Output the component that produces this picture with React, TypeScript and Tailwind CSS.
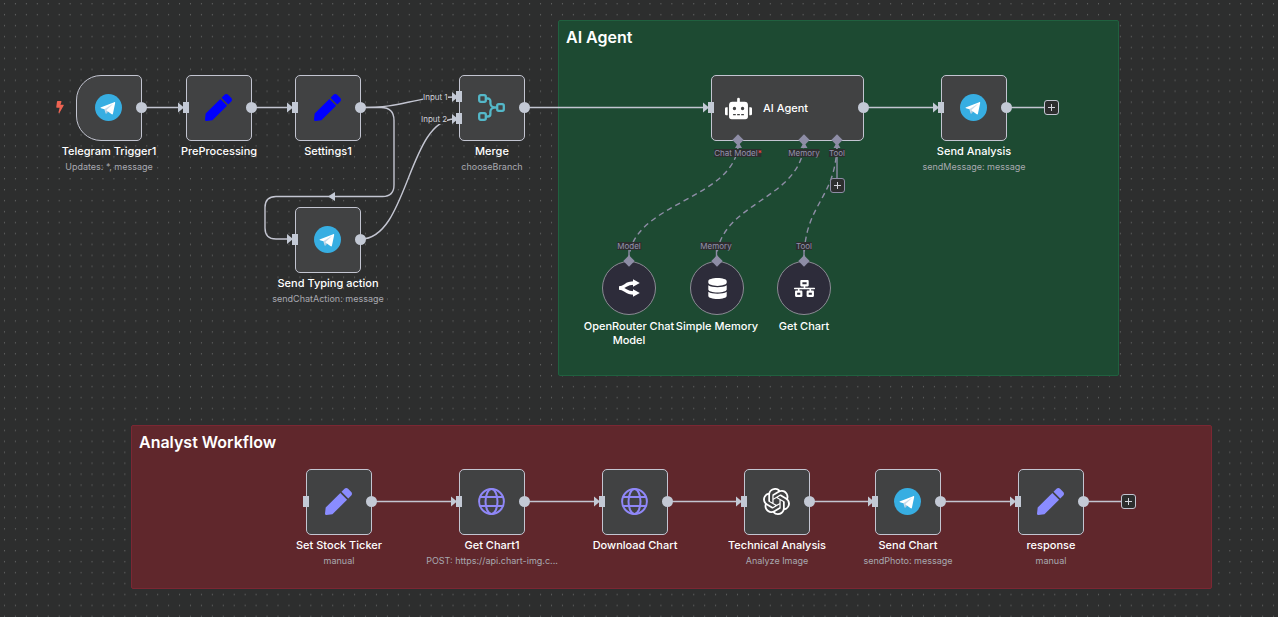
import type { ReactNode } from "react";
import { FaBolt, FaDatabase, FaNetworkWired, FaPen, FaRobot } from "react-icons/fa";
import { SiOpenai } from "react-icons/si";

function TelegramIcon() {
  return (
    <svg viewBox="0 0 240 240" className="size-[27px]" aria-hidden="true">
      <circle cx="120" cy="120" r="120" fill="#37aee2" />
      <path fill="#c8daea" d="M98 175c-3.888 0-3.227-1.468-4.568-5.17L82 132.207 170 80" />
      <path fill="#a9c9dd" d="M98 175c3 0 4.325-1.372 6-3l16-15.558-19.958-12.035" />
      <path
        fill="#fff"
        d="M100.04 144.41l48.36 35.729c5.519 3.045 9.501 1.468 10.876-5.123l19.685-92.763c2.015-8.08-3.08-11.746-8.36-9.349l-115.59 44.571c-7.89 3.165-7.843 7.567-1.438 9.528l29.663 9.259 68.673-43.325c3.242-1.966 6.218-.91 3.776 1.258"
      />
    </svg>
  );
}

function MergeIcon() {
  return (
    <svg viewBox="0 0 27 27" className="size-[27px]" fill="none" stroke="#54b8c9" strokeWidth="2.3" aria-hidden="true">
      <rect x="1.2" y="1.2" width="6.6" height="6.6" rx="1.5" />
      <rect x="1.2" y="19.2" width="6.6" height="6.6" rx="1.5" />
      <rect x="19.2" y="10.2" width="6.6" height="6.6" rx="1.5" />
      <path d="M7.8 4.5h2a2.6 2.6 0 0 1 2.6 2.6v2.2a4.2 4.2 0 0 0 4.2 4.2h2.6M7.8 22.500h2a2.6 2.6 0 0 0 2.6-2.6v-2.2a4.2 4.2 0 0 1 4.2-4.2" />
    </svg>
  );
}

function GlobeIcon() {
  return (
    <svg viewBox="0 0 27 27" className="size-[27px]" fill="none" stroke="#8f87f7" strokeWidth="2" aria-hidden="true">
      <circle cx="13.5" cy="13.5" r="12.4" />
      <ellipse cx="13.5" cy="13.5" rx="6" ry="12.4" />
      <path d="M1.8 9h23.4M1.8 18h23.4" />
    </svg>
  );
}

function RouterIcon() {
  return (
    <svg viewBox="0 0 21 18" className="h-[18px] w-[21px]" fill="#fff" aria-hidden="true">
      <path
        fill="none"
        stroke="#fff"
        strokeWidth="3.4"
        d="M0 9c3 0 4.5-1 6.5-2.5S10.5 4 15 4M0 9c3 0 4.5 1 6.5 2.5S10.500 14 15 14"
      />
      <path d="M14 .3 20.8 4 14 7.700zM14 10.300 20.800 14 14 17.700z" />
    </svg>
  );
}

function PlusButton({ place, label }: { place: string; label: string }) {
  return (
    <button
      type="button"
      aria-label={label}
      className={`absolute flex size-[15px] items-center justify-center rounded-[3px] border bg-[#2d2e2e] ${place}`}
    >
      <svg viewBox="0 0 7 7" className="size-[7px]" stroke="#d3d4dc" strokeWidth="1" aria-hidden="true">
        <path d="M3.5 0v7M0 3.5h7" />
      </svg>
    </button>
  );
}

function Title({ children }: { children: ReactNode }) {
  return <p className="text-[11px] leading-[14px] font-medium whitespace-nowrap text-white">{children}</p>;
}

type NodeProps = {
  place: string;
  title: string;
  subtitle?: string;
  icon: ReactNode;
  inputs?: string[];
  shape?: string;
};

function FlowNode({ place, title, subtitle, icon, inputs = ["top-[27px]"], shape = "rounded-[5px]" }: NodeProps) {
  return (
    <article className={`absolute flex w-[66px] flex-col items-center ${place}`}>
      <div
        className={`flex h-[66px] w-full items-center justify-center border border-[#c3c5d1] bg-[#414243] pr-px pb-px ${shape}`}
      >
        {icon}
      </div>
      {inputs.map((input) => (
        <span key={input} className={`absolute -left-[3px] h-[11px] w-[6px] bg-[#c3c9d5] ${input}`} />
      ))}
      <span className="absolute top-[27px] left-[60px] size-[11px] rounded-full bg-[#c3c9d5]" />
      <div className="mt-[3px] flex flex-col items-center gap-[2px]">
        <Title>{title}</Title>
        {subtitle && <p className="text-[9px] leading-[14px] whitespace-nowrap text-[#a8a9b0]">{subtitle}</p>}
      </div>
    </article>
  );
}

function PortLabel({ place, children }: { place: string; children: ReactNode }) {
  return (
    <span
      className={`absolute -translate-x-1/2 bg-[#2d2e2e] text-[8px] leading-[8px] whitespace-nowrap text-[#9392ae] ${place}`}
    >
      {children}
    </span>
  );
}

function Diamond({ place }: { place: string }) {
  return <span className={`absolute size-2 rotate-45 bg-[#8e8da6] ${place}`} />;
}

function SubNode({ place, title, icon }: { place: string; title: string; icon: ReactNode }) {
  return (
    <article className={`absolute flex w-[54px] flex-col items-center ${place}`}>
      <div className="flex h-[54px] w-full items-center justify-center rounded-full border border-[#8b8b94] bg-[#2d2c3a] text-white">
        {icon}
      </div>
      <Diamond place="-top-[4px] left-[23px]" />
      <p className="mt-1 w-[92px] text-center text-[11px] leading-[14px] font-medium text-white">{title}</p>
    </article>
  );
}

function Sticky({ place, title }: { place: string; title: string }) {
  return (
    <section className={`absolute rounded-[2px] border px-[7px] py-[6px] ${place}`}>
      <h2 className="text-[16px] leading-[20px] font-semibold text-white">{title}</h2>
    </section>
  );
}

function Backdrop() {
  return (
    <svg className="absolute inset-0 size-full" aria-hidden="true">
      <defs>
        <pattern id="dots" x="4" y="3" width="10.94" height="10.94" patternUnits="userSpaceOnUse">
          <rect width="1" height="1.4" fill="#5f6060" />
        </pattern>
      </defs>
      <rect width="100%" height="100%" fill="url(#dots)" />
    </svg>
  );
}

const wires = [
  "M142 107.5H180",
  "M252 107.5H290",
  "M361 107.5C408 107.5 408 97 455 97",
  "M361 107.5H381Q394 107.5 394 120.5V185Q394 196.5 382.5 196.5H276Q265 196.5 265 207.5V228Q265 239 276 239H290",
  "M361 239C408 239 408 119 455 119",
  "M525 107.5H706",
  "M864 107.5H936",
  "M1006 107.5H1045",
  "M372 501.5H454",
  "M525 501.5H597",
  "M667 501.5H739",
  "M810 501.5H871",
  "M941 501.5H1013",
  "M1083 501.5H1121",
];

const arrows = [
  [183, 107.5],
  [292, 107.5],
  [457, 97],
  [457, 119],
  [292, 239],
  [708, 107.5],
  [938, 107.5],
  [456, 501.5],
  [599, 501.5],
  [741, 501.5],
  [873, 501.5],
  [1015, 501.5],
];

function Wires() {
  return (
    <svg className="absolute inset-0 size-full" fill="none" aria-hidden="true">
      <g stroke="#c3c5d1" strokeWidth="1.4">
        {wires.map((d) => (
          <path key={d} d={d} />
        ))}
      </g>
      <g fill="#c3c9d5">
        {arrows.map(([x, y]) => (
          <path key={`${x}-${y}`} d={`M${x + 1} ${y}l-6 -5v10z`} />
        ))}
        <path d="M328 196.5l7 -4.5v9z" />
      </g>
      <g stroke="#8e8da6" strokeWidth="1.4">
        <g strokeDasharray="5.5 4">
          <path d="M629 261C629 201 738.5 201 738.5 141" />
          <path d="M716.5 261C716.5 201 804 201 804 141" />
          <path d="M804 261C804 201 837 201 837 141" />
        </g>
        <path d="M837 141V179M629 250V258M716.5 250V258M804 250V258" />
      </g>
      <path fill="#8e8da6" d="M738.5 142l3.5 6h-7zM804 142l3.5 6h-7zM837 142l3.5 6h-7z" />
    </svg>
  );
}

const bluePen = <FaPen className="size-[27px] text-[#0000ff]" />;
const violetPen = <FaPen className="size-[27px] text-[#8a8cff]" />;

export default function App() {
  return (
    <main className="relative min-h-screen overflow-hidden bg-[#2d2e2e] font-['Inter',sans-serif]">
      <Backdrop />

      <Sticky
        place="left-[558px] top-[20px] h-[356px] w-[561px] border-[#20603f] bg-[#1d4a32]"
        title="AI Agent"
      />
      <Sticky
        place="left-[131px] top-[425px] h-[164px] w-[1081px] border-[#7b2733] bg-[#60272c]"
        title="Analyst Workflow"
      />

      <Wires />

      <FaBolt className="absolute left-[54px] top-[101px] size-[12px] text-[#ee6352]" />
      <FlowNode
        place="left-[76px] top-[75px]"
        title="Telegram Trigger1"
        subtitle="Updates: *, message"
        icon={<TelegramIcon />}
        inputs={[]}
        shape="rounded-l-[25px] rounded-r-[5px]"
      />
      <FlowNode place="left-[186px] top-[75px]" title="PreProcessing" icon={bluePen} />
      <FlowNode place="left-[295px] top-[75px]" title="Settings1" icon={bluePen} />
      <FlowNode
        place="left-[459px] top-[75px]"
        title="Merge"
        subtitle="chooseBranch"
        icon={<MergeIcon />}
        inputs={["top-[16px]", "top-[38px]"]}
      />
      <span className="absolute left-[423px] top-[92px] bg-[#2d2e2e] text-[8px] leading-[10px] text-[#d0d1da]">Input 1</span>
      <span className="absolute left-[421px] top-[114px] bg-[#2d2e2e] text-[8px] leading-[10px] text-[#d0d1da]">Input 2</span>
      <FlowNode
        place="left-[295px] top-[207px]"
        title="Send Typing action"
        subtitle="sendChatAction: message"
        icon={<TelegramIcon />}
      />

      <article className="absolute left-[711px] top-[75px] w-[153px]">
        <div className="flex h-[66px] items-center gap-[11px] rounded-[5px] border border-[#c3c5d1] bg-[#414243] pl-[13px]">
          <FaRobot className="size-[27px] text-white" />
          <Title>AI Agent</Title>
        </div>
        <span className="absolute -left-[3px] top-[27px] h-[11px] w-[6px] bg-[#c3c9d5]" />
        <span className="absolute left-[147px] top-[27px] size-[11px] rounded-full bg-[#c3c9d5]" />
        <Diamond place="left-[23px] top-[61px]" />
        <Diamond place="left-[89px] top-[61px]" />
        <Diamond place="left-[122px] top-[61px]" />
      </article>
      <PortLabel place="left-[738px] top-[149px]">
        Chat Model<span className="text-[#ff4a4a]">*</span>
      </PortLabel>
      <PortLabel place="left-[804px] top-[149px]">Memory</PortLabel>
      <PortLabel place="left-[837px] top-[149px]">Tool</PortLabel>
      <PlusButton place="left-[830px] top-[178px] border-[#8e8da6]" label="Add tool" />

      <FlowNode
        place="left-[941px] top-[75px]"
        title="Send Analysis"
        subtitle="sendMessage: message"
        icon={<TelegramIcon />}
      />
      <PlusButton place="left-[1044px] top-[100px] border-[#c3c5d1]" label="Add node after Send Analysis" />

      <PortLabel place="left-[629px] top-[242px]">Model</PortLabel>
      <PortLabel place="left-[716px] top-[242px]">Memory</PortLabel>
      <PortLabel place="left-[804px] top-[242px]">Tool</PortLabel>
      <SubNode place="left-[602px] top-[261px]" title="OpenRouter Chat Model" icon={<RouterIcon />} />
      <SubNode place="left-[690px] top-[261px]" title="Simple Memory" icon={<FaDatabase className="size-[21px]" />} />
      <SubNode place="left-[777px] top-[261px]" title="Get Chart" icon={<FaNetworkWired className="size-[21px]" />} />

      <FlowNode place="left-[306px] top-[469px]" title="Set Stock Ticker" subtitle="manual" icon={violetPen} />
      <FlowNode
        place="left-[459px] top-[469px]"
        title="Get Chart1"
        subtitle="POST: https://api.chart-img.c..."
        icon={<GlobeIcon />}
      />
      <FlowNode place="left-[602px] top-[469px]" title="Download Chart" icon={<GlobeIcon />} />
      <FlowNode
        place="left-[744px] top-[469px]"
        title="Technical Analysis"
        subtitle="Analyze Image"
        icon={<SiOpenai className="size-[27px] text-white" />}
      />
      <FlowNode
        place="left-[875px] top-[469px]"
        title="Send Chart"
        subtitle="sendPhoto: message"
        icon={<TelegramIcon />}
      />
      <FlowNode place="left-[1018px] top-[469px]" title="response" subtitle="manual" icon={violetPen} />
      <PlusButton place="left-[1121px] top-[494px] border-[#c3c5d1]" label="Add node after response" />
    </main>
  );
}
